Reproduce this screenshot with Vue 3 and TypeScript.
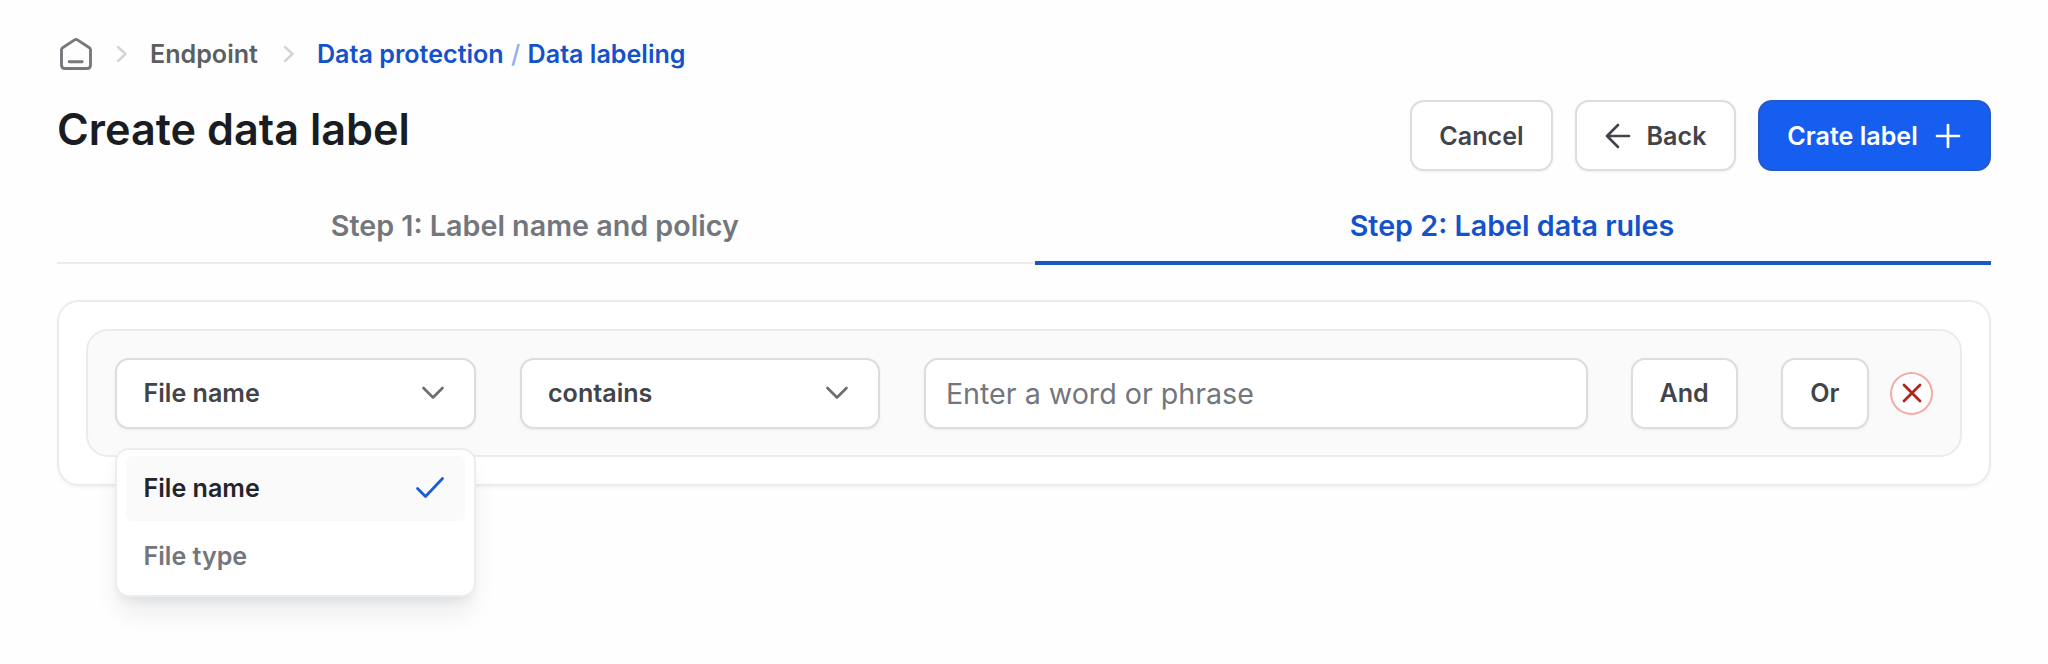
<script setup lang="ts">
import { ref } from 'vue'

const options = ref<string[]>(['File name', 'File type'])
const selected = ref<string>('File name')
const phrase = ref<string>('')
</script>

<template>
  <main class="page">
    <nav class="crumbs">
      <svg class="home" viewBox="0 0 32 32">
        <path d="M1.5 11.8 Q1.5 10.5 2.6 9.7 L14.6 1.9 Q16 1 17.4 1.9 L29.4 9.7 Q30.5 10.5 30.5 11.8 V27 Q30.5 30.5 27 30.5 H5 Q1.5 30.5 1.5 27 Z M9.2 23.7 H22.2" />
      </svg>
      <svg class="sep" viewBox="0 0 12 18"><path d="M2 2 L9.6 9 L2 16" /></svg>
      <a class="crumb">Endpoint</a>
      <svg class="sep second" viewBox="0 0 12 18"><path d="M2 2 L9.6 9 L2 16" /></svg>
      <span class="current"><a>Data protection</a><i>/</i><a>Data labeling</a></span>
    </nav>

    <header class="head">
      <h1>Create data label</h1>
      <div class="actions">
        <button class="btn cancel">Cancel</button>
        <button class="btn back">
          <svg viewBox="0 0 26 26"><path d="M24 13 H2 M13 2 L2 13 L13 24" /></svg>
          <span>Back</span>
        </button>
        <button class="btn primary">
          <span>Crate label</span>
          <svg viewBox="0 0 26 26"><path d="M13 2 V24 M2 13 H24" /></svg>
        </button>
      </div>
    </header>

    <div class="tabs">
      <div class="tab">Step 1: Label name and policy</div>
      <div class="tab active">Step 2: Label data rules</div>
    </div>

    <section class="card">
      <div class="rule">
        <div class="picker">
          <button class="btn select">
            <span>{{ selected }}</span>
            <svg viewBox="0 0 24 16"><path d="M2.5 3 L12 12.5 L21.5 3" /></svg>
          </button>
          <ul class="menu">
            <li v-for="option in options" :key="option" :class="{ chosen: option === selected }" @click="selected = option">
              <span>{{ option }}</span>
              <svg v-if="option === selected" viewBox="0 0 30 24"><path d="M2.5 12.5 L10.5 20.5 L27.5 2.5" /></svg>
            </li>
          </ul>
        </div>
        <button class="btn select">
          <span class="op">contains</span>
          <svg viewBox="0 0 24 16"><path d="M2.5 3 L12 12.5 L21.5 3" /></svg>
        </button>
        <input v-model="phrase" class="phrase" type="text" placeholder="Enter a word or phrase" />
        <button class="btn and">And</button>
        <button class="btn or">Or</button>
        <button class="remove">
          <svg viewBox="0 0 20 20"><path d="M2 2 L18 18 M18 2 L2 18" /></svg>
        </button>
      </div>
    </section>
  </main>
</template>

<style>
body { background: #fefefe; }
</style>

<style scoped>
* { box-sizing: border-box; }
.page {
  width: 2048px;
  height: 664px;
  padding: 33px 57px 0 57px;
  overflow: hidden;
  background: #fefefe;
  font-family: Inter, "Liberation Sans", sans-serif;
  font-size: 25.1px;
  font-weight: 600;
  color: #414449;
}
svg { display: block; flex: none; fill: none; stroke: currentColor; stroke-linecap: round; stroke-linejoin: round; }

.crumbs { display: flex; align-items: center; height: 41px; padding-top: 1px; color: #5b5e62; }
.home { width: 32px; height: 32px; margin: 0 0 1px 2.5px; stroke-width: 2.9; color: #77797d; }
.sep { width: 12px; height: 18px; margin-left: 24px; stroke-width: 2.4; color: #d3d4d6; }
.crumb { margin-left: 22.5px; width: 110px; white-space: nowrap; }
.sep.second { margin-left: 22.5px; }
.current { display: flex; margin-left: 22.5px; color: #1452cc; white-space: nowrap; }
.current i { margin: 0 7.3px; font-style: normal; font-weight: 500; color: #8fb0ee; }

.head { display: flex; justify-content: space-between; height: 71px; margin-top: 26px; }
h1 { margin: 3px 0 0; font-size: 43.2px; line-height: 52px; font-weight: 600; color: #191c22; white-space: nowrap; }
.actions { display: flex; gap: 22px; }

.btn {
  display: flex;
  align-items: center;
  justify-content: center;
  height: 71px;
  padding: 0;
  border: 2px solid #dcddde;
  border-radius: 14px;
  background: #fff;
  box-shadow: 0 1px 2.5px rgba(16, 24, 40, 0.07);
  font: inherit;
  color: #414449;
  white-space: nowrap;
}
.cancel { width: 143px; }
.back { width: 161px; gap: 16px; }
.back svg, .primary svg { width: 26px; height: 26px; stroke-width: 2.7; }
.primary { width: 233px; gap: 17px; padding-right: 1px; border-color: #2559c4; background: #155eef; color: #fff; box-shadow: none; }

.tabs { display: grid; grid-template-columns: 978px 1fr; height: 65px; margin-top: 29px; font-size: 28.7px; color: #73767c; }
.tab { padding-right: 22.5px; border-bottom: 2px solid #ececed; line-height: 52px; text-align: center; white-space: nowrap; }
.tab:not(.active) { height: 64px; }
.tab.active { padding-right: 2px; border-bottom: 4px solid #1858c6; color: #1452cc; }

.card {
  height: 186px;
  margin-top: 35px;
  padding: 27px 27px;
  border: 2px solid #ececed;
  border-radius: 22px;
  background: #fff;
  box-shadow: 0 1.5px 2.5px rgba(16, 24, 40, 0.04);
}
.rule {
  display: flex;
  align-items: center;
  height: 128px;
  padding: 0 27px;
  border: 2px solid #ebebec;
  border-radius: 22px;
  background: #fafafa;
}
.picker { position: relative; margin-right: 43.5px; }
.select { width: 361px; justify-content: space-between; padding: 0 29px 0 26.5px; }
.select svg { width: 24px; height: 16px; stroke-width: 2.7; color: #6c6f73; }
.phrase {
  width: 664px;
  height: 71px;
  margin-left: 43.5px;
  padding: 0 20px;
  border: 2px solid #dcddde;
  border-radius: 14px;
  background: #fff;
  box-shadow: 0 1px 2.5px rgba(16, 24, 40, 0.07);
  font: 400 28.65px Inter, "Liberation Sans", sans-serif;
  color: #414449;
  outline: none;
}
.phrase::placeholder { color: #73767c; opacity: 1; }
.and { width: 107px; margin-left: 43px; }
.or { width: 87.5px; margin-left: 43.5px; }
.remove {
  display: flex;
  align-items: center;
  justify-content: center;
  width: 43px;
  height: 43px;
  margin-left: 21.5px;
  padding: 0;
  border: 2px solid #f4aaa6;
  border-radius: 50%;
  background: #fff;
  color: #ad261d;
}
.remove svg { width: 20px; height: 20px; stroke-width: 2.8; }

.menu {
  position: absolute;
  top: 90px;
  left: 0;
  z-index: 2;
  width: 361px;
  height: 149px;
  margin: 0;
  padding: 6px 9px;
  border: 2px solid #ededee;
  border-radius: 14px;
  background: #fff;
  box-shadow: 0 20px 28px -6px rgba(16, 24, 40, 0.09), 0 7px 10px -3px rgba(16, 24, 40, 0.06);
  list-style: none;
}
.menu li {
  display: flex;
  align-items: center;
  justify-content: space-between;
  height: 65px;
  padding: 0 20px 0 17.5px;
  border-radius: 6px;
  color: #73767c;
}
.menu li + li { margin-top: 3px; }
.menu li.chosen { background: #fafafa; color: #22252b; }
.menu svg { width: 30px; height: 24px; stroke-width: 2.8; color: #1c5bd6; }
</style>
